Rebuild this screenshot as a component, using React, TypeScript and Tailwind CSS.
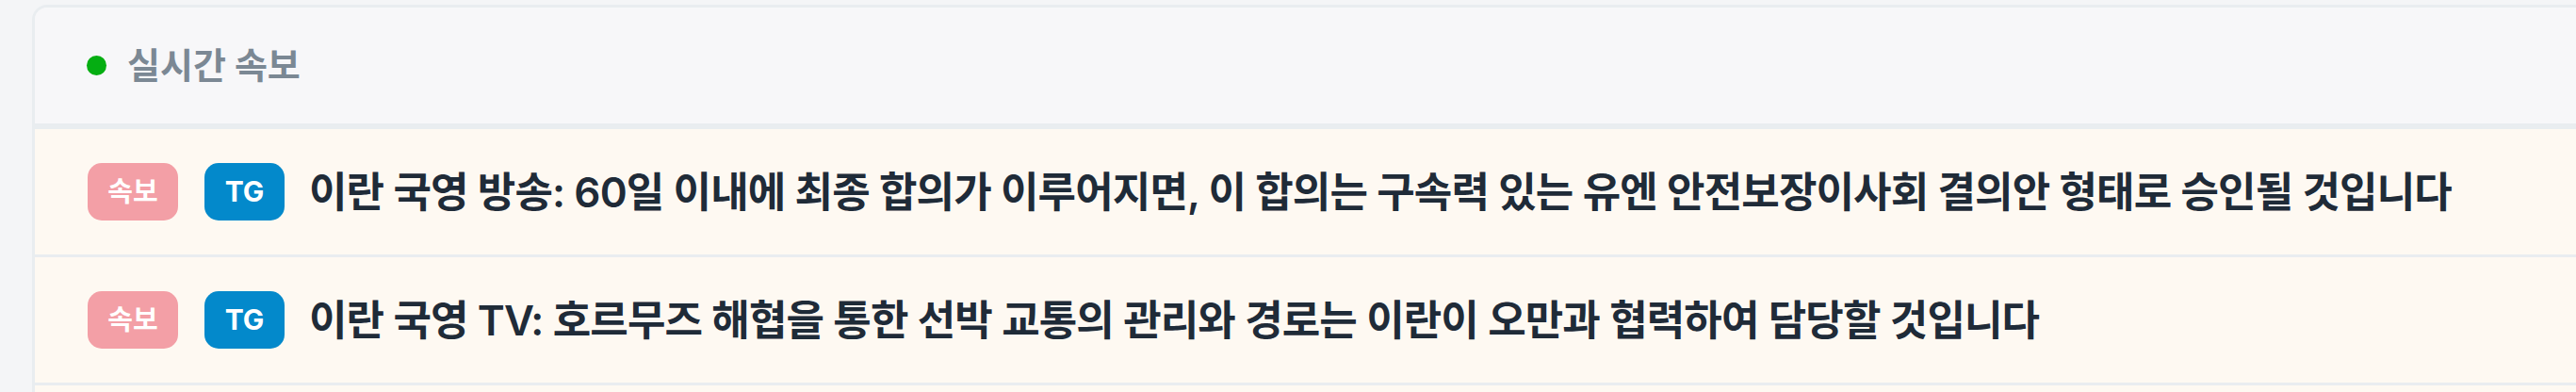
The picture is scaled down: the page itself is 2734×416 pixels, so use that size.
import { FC } from 'react';

const NEWS = [
  {
    id: 'n1',
    source: 'TG',
    title:
      '이란 국영 방송: 60일 이내에 최종 합의가 이루어지면, 이 합의는 구속력 있는 유엔 안전보장이사회 결의안 형태로 승인될 것입니다',
  },
  {
    id: 'n2',
    source: 'TG',
    title: '이란 국영 TV: 호르무즈 해협을 통한 선박 교통의 관리와 경로는 이란이 오만과 협력하여 담당할 것입니다',
  },
];

const FONT = "font-['Inter','Noto_Sans_CJK_KR',sans-serif]";

interface NewsRowProps {
  source: string;
  title: string;
}

const NewsRow: FC<NewsRowProps> = ({ source, title }) => (
  <div className="flex h-[136px] items-center gap-[28px] border-b-[3px] border-[#e9edf0] pl-[56px]">
    <span className="inline-flex h-[61px] w-[96px] items-center justify-center rounded-[15px] bg-[#f39fa6] text-[29px] font-bold text-white">
      속보
    </span>
    <div className="flex items-center gap-[26px]">
      <span className="inline-flex h-[61px] w-[85px] items-center justify-center rounded-[15px] bg-[#0389cb] text-[30px] font-bold text-white">
        {source}
      </span>
      <p className="whitespace-nowrap text-[44px] font-semibold tracking-[-0.02em] text-[#1f2b38]">{title}</p>
    </div>
  </div>
);

export default function App() {
  return (
    <div className={`h-[416px] w-[2734px] overflow-hidden bg-[#f4f5f7] pl-[34px] pt-[5px] ${FONT}`}>
      <div className="w-[2800px] overflow-hidden rounded-[16px] border-[3px] border-[#e9edf0]">
        <div className="flex h-[126px] items-center gap-[22px] border-b-[3px] border-[#e9edf0] bg-[#f7f7f9] pl-[55px]">
          <span className="h-[21px] w-[21px] rounded-full bg-[#05ae12]" />
          <h2 className="text-[38px] font-bold text-[#7b8894]">실시간 속보</h2>
        </div>
        <div className="h-[420px] border-t-[3px] border-[#e9edf0] bg-[#fef9f2]">
          {NEWS.map((item) => (
            <NewsRow key={item.id} source={item.source} title={item.title} />
          ))}
        </div>
      </div>
    </div>
  );
}
